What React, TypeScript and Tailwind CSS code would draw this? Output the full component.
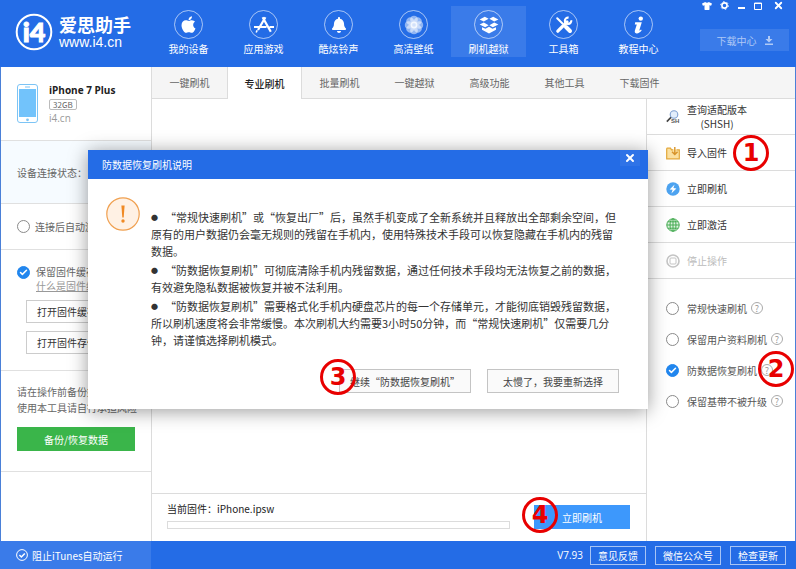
import React, { useState } from 'react';
import clsx from 'clsx';
import { FaApple, FaBell, FaTshirt } from 'react-icons/fa';
import { Check, X } from 'lucide-react';

const Logo = () => (
  <svg width="38" height="38" viewBox="0 0 38 38" aria-hidden="true">
    <circle cx="19" cy="19" r="17.3" fill="none" stroke="#fff" strokeWidth="2" />
    <text x="19" y="29" textAnchor="middle" fill="#fff" stroke="#fff" strokeWidth="1" fontFamily="Lato, sans-serif" fontWeight="900" fontSize="27">
      i4
    </text>
  </svg>
);

const StoreIcon = () => (
  <svg width="22" height="20" viewBox="0 0 22 20" fill="none" stroke="#fff" strokeWidth="2.2">
    <path d="M12.4 2.2 5 15M9.6 2.2l8.2 14.6M1 12h12.5M16.5 12H21" />
    <path d="M4.2 15.2l-1 2.3" strokeWidth="1.6" />
  </svg>
);

const FlowerIcon = () => (
  <svg width="20" height="20" viewBox="0 0 20 20" fill="#fff">
    {[0, 45, 90, 135, 180, 225, 270, 315].map((angle) => (
      <circle key={angle} cx="10" cy="4.6" r="3.8" fillOpacity="0.5" transform={`rotate(${angle} 10 10)`} />
    ))}
    <circle cx="10" cy="10" r="3.4" fillOpacity="0.8" />
  </svg>
);

const BoxIcon = () => (
  <svg width="20" height="18" viewBox="0 0 20 18" fill="#fff">
    <path d="M5.8.8 9.6 2.8 4.8 5.6.6 3.4zM14.2.8 10.4 2.8l4.8 2.8 4.2-2.2z" />
    <path d="M4.8 6.4 9.6 9.2 6.2 11.2.6 8.6zM15.2 6.4 10.4 9.2l3.4 2 5.6-2.6z" />
    <path d="M3 11.2l3.5 1.6L10 10.8l3.5 2 3.5-1.6v2.6l-7 3.8-7-3.8z" />
  </svg>
);

const ToolsIcon = () => (
  <svg width="18" height="18" viewBox="0 0 18 18" fill="none" stroke="#fff" strokeLinecap="round">
    <path d="M2.8 15.2 12 6" strokeWidth="3.2" />
    <path d="M16.2 4.2a3.2 3.2 0 1 1-2.6-2.6" strokeWidth="2.2" strokeLinecap="butt" />
    <path d="M2.2 2.2 7.5 7.5" strokeWidth="2" />
    <path d="M11 11l4 4" strokeWidth="4" />
  </svg>
);

const InfoIcon = () => (
  <svg width="12" height="18" viewBox="0 0 12 18" fill="#fff">
    <circle cx="7.8" cy="2.6" r="2.2" />
    <path d="M2.2 6.2h6.6L6.4 14c-.2.8.5.7 1.6-.4l.7.7C7 16.6 5.2 17.6 3.5 17.4c-1.6-.2-2-1.2-1.6-2.8l1.9-6.2H1.8z" />
  </svg>
);

const PhoneIcon = () => (
  <svg width="21" height="40" viewBox="0 0 21 40" aria-hidden="true">
    <rect x="0.5" y="0.5" width="20" height="38" rx="2.5" fill="#fff" stroke="#7cc4f5" />
    <rect x="2" y="5" width="17" height="28" fill="#72c3fb" />
    <path d="M8 3h5" stroke="#7cc4f5" />
    <circle cx="10.5" cy="35.8" r="1.4" fill="#7cc4f5" />
  </svg>
);

const ShshIcon = () => (
  <svg width="14" height="14" viewBox="0 0 14 14" fill="none">
    <circle cx="8" cy="4.5" r="3.8" fill="#e3eefb" stroke="#7e9fd0" strokeWidth="1.1" />
    <path d="M5 7.4.8 11.6" stroke="#444" strokeWidth="1.6" />
    <text x="5" y="13" fontSize="6" fontWeight="700" fill="#555" fontFamily="Liberation Sans, sans-serif">SH</text>
  </svg>
);

const ImportIcon = () => (
  <svg width="14" height="14" viewBox="0 0 14 14" fill="none">
    <path d="M.7 2.2h3.8l1 1.6H7M10.5 3.8h2.8v9H.7V2.2" fill="#fbe0a0" stroke="#e3a83a" strokeWidth="1.2" />
    <path d="M8.8 1v7M6 5.8l2.8 2.8 2.8-2.8" stroke="#d8932a" strokeWidth="1.4" />
  </svg>
);

const FlashIcon = () => (
  <svg width="14" height="14" viewBox="0 0 14 14">
    <circle cx="7" cy="7" r="6.7" fill="#4da3f0" />
    <path d="M8.6 2.6 3.6 7.4l3 .3-1.2 3.8 5-5-3-.4z" fill="#fff" />
  </svg>
);

const GlobeIcon = () => (
  <svg width="14" height="14" viewBox="0 0 14 14" fill="none" stroke="#45ab52">
    <circle cx="7" cy="7" r="6.2" fill="#dff3e0" />
    <ellipse cx="7" cy="7" rx="3" ry="6.2" />
    <path d="M7 .8v12.4M.8 7h12.4M1.8 3.8h10.4M1.8 10.2h10.4" />
  </svg>
);

const StopIcon = () => (
  <svg width="14" height="14" viewBox="0 0 14 14" fill="none" stroke="#c4c4c4">
    <circle cx="7" cy="7" r="6" strokeWidth="1.6" />
    <rect x="4" y="4" width="6" height="6" rx="1" />
  </svg>
);

const navItems = [
  { label: '我的设备', icon: <FaApple size={19} /> },
  { label: '应用游戏', icon: <StoreIcon /> },
  { label: '酷炫铃声', icon: <FaBell size={16} /> },
  { label: '高清壁纸', icon: <FlowerIcon /> },
  { label: '刷机越狱', icon: <BoxIcon /> },
  { label: '工具箱', icon: <ToolsIcon /> },
  { label: '教程中心', icon: <InfoIcon /> },
];

const tabs = ['一键刷机', '专业刷机', '批量刷机', '一键越狱', '高级功能', '其他工具', '下载固件'];

const modes = [
  { id: 'normal', label: '常规快速刷机' },
  { id: 'keep', label: '保留用户资料刷机' },
  { id: 'secure', label: '防数据恢复刷机', step: 2 },
  { id: 'baseband', label: '保留基带不被升级' },
];

// Красный кружок с номером шага
const StepMark = ({ n, className }: { n: number; className: string }) => (
  <span
    className={clsx(
      "absolute z-20 flex h-9 w-9 items-center justify-center rounded-full border-[3px] border-[#e80000] font-['DejaVu_Sans',sans-serif] text-2xl leading-none font-bold text-[#e80000]",
      className,
    )}
  >
    {n}
  </span>
);

const Bullet = () => <span className="inline-block w-[14px] align-top text-[7px]">●</span>;

interface TickProps extends React.InputHTMLAttributes<HTMLInputElement> {
  type: 'radio' | 'checkbox';
}

const Tick = ({ type, ...rest }: TickProps) => (
  <span className="relative flex h-[13px] w-[13px] shrink-0">
    <input
      type={type}
      className="peer h-[13px] w-[13px] appearance-none rounded-full border border-[#8a8a8a] bg-white checked:border-[#2186ee] checked:bg-[#2186ee]"
      {...rest}
    />
    <Check size={9} strokeWidth={4} className="pointer-events-none absolute top-[2px] left-[2px] hidden text-white peer-checked:block" />
  </span>
);

const Header = () => (
  <header className="flex h-[67px] shrink-0 bg-[#246ce6] text-white">
    <div className="flex w-[151px] shrink-0 items-center gap-[6px] pb-1 pl-[15px]">
      <Logo />
      <div className="flex flex-col whitespace-nowrap">
        <span className="text-lg leading-5 font-bold">爱思助手</span>
        <span className="font-['Liberation_Sans',sans-serif] text-sm leading-4">www.i4.cn</span>
      </div>
    </div>
    <nav className="flex pt-[6px]">
      {navItems.map((item) => (
        <a
          key={item.label}
          href="#"
          className={clsx(
            'flex h-[51px] w-[75px] flex-col items-center gap-1 pt-1',
            item.label === '刷机越狱' && 'bg-white/10',
          )}
        >
          <span className="flex h-[29px] w-[29px] items-center justify-center rounded-full border border-white/60">{item.icon}</span>
          <span className="leading-3">{item.label}</span>
        </a>
      ))}
    </nav>
    <div className="flex flex-1 flex-col items-end gap-[18px] pr-[7px]">
      <div className="flex h-[11px] items-center gap-px">
        <button aria-label="皮肤" className="flex w-4 justify-center"><FaTshirt size={10} /></button>
        <button aria-label="设置" className="flex w-4 justify-center">
          <svg width="9" height="9" viewBox="0 0 9 9" fill="none" stroke="#fff">
            <circle cx="4.5" cy="4.5" r="2.6" strokeWidth="1.6" />
            <circle cx="4.5" cy="4.5" r="3.9" strokeDasharray="1.5 2.6" />
          </svg>
        </button>
        <button aria-label="最小化" className="flex w-4 justify-center">
          <svg width="7" height="9" viewBox="0 0 7 9"><path d="M0 7h7" stroke="#fff" strokeWidth="2" /></svg>
        </button>
        <button aria-label="最大化" className="flex w-4 justify-center">
          <svg width="8" height="8" viewBox="0 0 8 8"><path d="M.5 1h7v6.5h-7zM.5 1.5h7" fill="none" stroke="#fff" /></svg>
        </button>
        <button aria-label="关闭" className="flex w-[22px] justify-center"><X size={11} strokeWidth={4} /></button>
      </div>
      <button className="flex h-[22px] w-[89px] items-center justify-center gap-2 bg-white/10 text-white/60">
        下载中心
        <svg width="8" height="9" viewBox="0 0 8 9" fill="currentColor">
          <path d="M3 0h2v3h2.5L4 6.5.5 3H3zM0 7.5h8V9H0z" />
        </svg>
      </button>
    </div>
  </header>
);

const Sidebar = () => (
  <aside className="flex w-[151px] shrink-0 flex-col border-r border-[#dcdcdc] text-[#666]">
    <section className="flex h-[73px] gap-[11px] pt-[17px] pl-4">
      <PhoneIcon />
      <div className="flex flex-col items-start">
        <h2 className="font-['Open_Sans',sans-serif] text-[10px] leading-3 font-bold text-[#222]">iPhone 7 Plus</h2>
        <span className="mt-[3px] rounded-xs border border-[#bbb] px-[3px] text-[8px] leading-[9px]">32GB</span>
        <span className="mt-[2px] font-['Open_Sans',sans-serif] leading-3 text-[#999]">i4.cn</span>
      </div>
    </section>
    <section className="flex h-16 items-center border-y border-[#e0e0e0] bg-[#f6fbff] pl-4">设备连接状态：</section>
    <section className="flex h-[46px] items-center border-b border-[#e0e0e0] pl-4">
      <label className="flex items-center gap-[5px] whitespace-nowrap">
        <Tick type="checkbox" />
        连接后自动激活设备
      </label>
    </section>
    <section className="flex h-[121px] flex-col border-b border-[#e0e0e0] pt-[15px] pl-4">
      <label className="flex items-center gap-[6px] leading-[14px] whitespace-nowrap">
        <Tick type="checkbox" defaultChecked />
        保留固件缓存文件
      </label>
      <a href="#" className="ml-[19px] leading-[14px] text-[#999] underline">什么是固件缓存？</a>
      <div className="mt-[7px] ml-[9px] flex w-[108px] flex-col gap-2 text-[#333]">
        <button className="h-[23px] border border-[#ccc] bg-white pl-[10px] text-left">打开固件缓存目录</button>
        <button className="h-[23px] border border-[#ccc] bg-white pl-[10px] text-left">打开固件存储目录</button>
      </div>
    </section>
    <section className="h-[101px] border-b border-[#e0e0e0] px-4 pt-[13px]">
      <p className="leading-4 whitespace-nowrap">请在操作前备份好数据，<br />使用本工具请自行承担风险</p>
      <button className="mt-[11px] h-6 w-full bg-[#3ab54a] text-white">备份/恢复数据</button>
    </section>
  </aside>
);

const Actions = () => {
  const [mode, setMode] = useState('secure');
  const row = 'relative flex h-9 w-full items-center gap-[7px] border-b border-[#dcdcdc] pl-[19px] text-left';

  return (
    <aside className="flex w-[149px] shrink-0 flex-col border-l border-[#dcdcdc] text-[#333]">
      <button className={row}>
        <ShshIcon />
        <span className="text-center leading-[14px]">查询适配版本<br />(SHSH)</span>
      </button>
      <button className={row}>
        <ImportIcon />
        导入固件
        <StepMark n={1} className="top-0 left-[86px]" />
      </button>
      <button className={row}><FlashIcon />立即刷机</button>
      <button className={row}><GlobeIcon />立即激活</button>
      <button disabled className={clsx(row, 'text-[#bbb]')}><StopIcon />停止操作</button>
      <div className="flex flex-col gap-[17px] pt-[22px] pl-[19px] text-[#555]">
        {modes.map((m) => (
          <div key={m.id} className="relative flex h-[14px] items-center gap-1">
            <label className="flex items-center gap-2 whitespace-nowrap">
              <Tick type="radio" name="mode" checked={mode === m.id} onChange={() => setMode(m.id)} />
              {m.label}
            </label>
            <button aria-label="帮助" className="flex h-3 w-3 items-center justify-center rounded-full border border-[#aaa] text-[9px] leading-none text-[#999]">
              ?
            </button>
            {m.step && <StepMark n={m.step} className="-top-3 left-[92px]" />}
          </div>
        ))}
      </div>
    </aside>
  );
};

const Dialog = () => (
  <div
    role="dialog"
    aria-labelledby="dialog-title"
    className="absolute top-[150px] left-[88px] z-10 w-[560px] bg-white pb-4 shadow-[0_2px_18px_rgba(0,0,0,0.4)]"
  >
    <div className="flex h-[29px] justify-between bg-[#246ce6] pr-2 pl-[14px] text-white">
      <h1 id="dialog-title" className="self-center">防数据恢复刷机说明</h1>
      <button aria-label="关闭" className="flex h-4 w-5 items-center justify-center bg-white/5">
        <X size={12} strokeWidth={4} />
      </button>
    </div>
    <div className="flex gap-[11px] pt-[18px] pl-[18px]">
      <svg width="34" height="34" viewBox="0 0 34 34" className="shrink-0">
        <circle cx="17" cy="17" r="16.2" fill="#fff1e4" stroke="#f0a050" strokeWidth="1.2" />
        <path d="M15.4 8.6h3.2l-.9 12h-1.4z" fill="#f08a24" />
        <circle cx="17" cy="24" r="1.7" fill="#f08a24" />
      </svg>
      <div className="flex flex-col gap-[2px] pt-3 text-[11px] leading-[17px] whitespace-nowrap text-[#333]">
        <p>
          <Bullet />“常规快速刷机”或“恢复出厂”后，虽然手机变成了全新系统并且释放出全部剩余空间，但<br />
          原有的用户数据仍会毫无规则的残留在手机内，使用特殊技术手段可以恢复隐藏在手机内的残留<br />
          数据。
        </p>
        <p>
          <Bullet />“防数据恢复刷机”可彻底清除手机内残留数据，通过任何技术手段均无法恢复之前的数据，<br />
          有效避免隐私数据被恢复并被不法利用。
        </p>
        <p>
          <Bullet />“防数据恢复刷机”需要格式化手机内硬盘芯片的每一个存储单元，才能彻底销毁残留数据，<br />
          所以刷机速度将会非常缓慢。本次刷机大约需要3小时50分钟，而“常规快速刷机”仅需要几分<br />
          钟，请谨慎选择刷机模式。
        </p>
      </div>
    </div>
    <div className="mt-5 flex justify-end gap-4 pr-[29px] text-[#444]">
      <button className="relative h-6 w-[132px] border border-[#c4c4c4] bg-[#fafafa]">
        继续“防数据恢复刷机”
        <StepMark n={3} className="-top-[11px] -left-5" />
      </button>
      <button className="h-6 w-[132px] border border-[#c4c4c4] bg-[#fafafa]">太慢了，我要重新选择</button>
    </div>
  </div>
);

const Footer = () => (
  <footer className="flex h-7 shrink-0 items-center bg-[#246ce6] pr-[10px] text-white">
    <button className="flex h-full w-[151px] items-center gap-1 bg-white/10 pl-4">
      <svg width="12" height="12" viewBox="0 0 12 12" fill="none" stroke="#fff">
        <circle cx="6" cy="6" r="5.4" />
        <path d="M3.4 6l2 2 3.4-3.6" strokeWidth="1.5" />
      </svg>
      阻止iTunes自动运行
    </button>
    <span className="ml-auto pr-[7px] font-['Open_Sans',sans-serif]">V7.93</span>
    <div className="flex gap-[9px]">
      <button className="h-[19px] w-14 border border-white/60">意见反馈</button>
      <button className="h-[19px] w-[66px] border border-white/60">微信公众号</button>
      <button className="h-[19px] w-14 border border-white/60">检查更新</button>
    </div>
  </footer>
);

const App: React.FC = () => {
  const [activeTab, setActiveTab] = useState('专业刷机');

  return (
    <div lang="zh-CN" className="relative flex min-h-screen flex-col bg-white font-['Noto_Sans_CJK_SC',sans-serif] text-[10px]">
      <Header />
      <div className="flex flex-1 border-x border-[#4a80d8]">
        <Sidebar />
        <div className="flex min-w-0 flex-1 flex-col">
          <div className="flex h-8 border-b border-[#dcdcdc] bg-[#f5f5f5]">
            {tabs.map((tab) => (
              <button
                key={tab}
                onClick={() => setActiveTab(tab)}
                className={clsx(
                  'w-[75px]',
                  tab === activeTab ? '-mb-px border-x border-[#dcdcdc] bg-white font-medium text-[#222]' : 'text-[#666]',
                )}
              >
                {tab}
              </button>
            ))}
          </div>
          <div className="flex flex-1">
            <main className="flex min-w-0 flex-1 flex-col justify-end">
              <div className="flex h-12 justify-between gap-6 border-t border-[#dcdcdc] pr-4 pl-[15px]">
                <div className="flex flex-1 flex-col gap-[5px] pt-[8px] text-[#222]">
                  <span className="leading-[14px]">当前固件：iPhone.ipsw</span>
                  <div role="progressbar" aria-label="进度" className="h-2 border border-[#dcdcdc]" />
                </div>
                <button className="relative mt-[11px] h-6 w-24 bg-[#3d98fc] text-white">
                  立即刷机
                  <StepMark n={4} className="-top-2 -left-3" />
                </button>
              </div>
            </main>
            <Actions />
          </div>
        </div>
      </div>
      <Footer />
      <Dialog />
    </div>
  );
};

export default App;
